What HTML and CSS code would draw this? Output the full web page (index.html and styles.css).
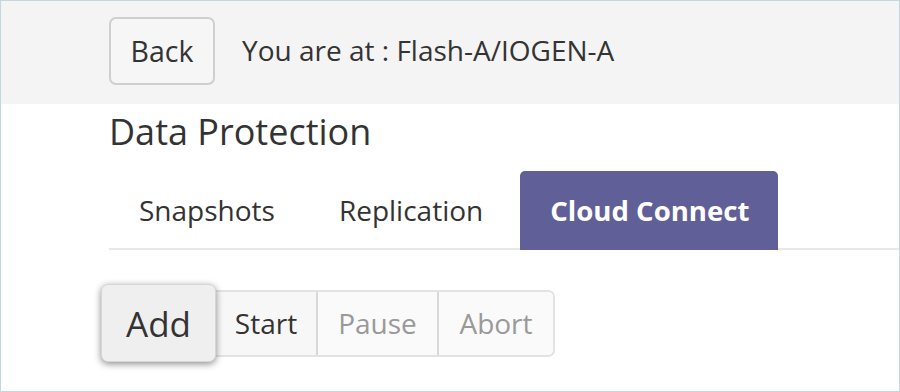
FILE: index.html
```html
<!DOCTYPE html>
<html>
<head>
<meta charset="utf-8">
<link rel="stylesheet" href="styles.css">
</head>
<body>
<div class="frame">
  <header class="topbar">
    <button class="back-btn">Back</button>
    <span class="crumb">You are at : Flash-A/IOGEN-A</span>
  </header>
  <main class="content">
    <h1 class="title">Data Protection</h1>
    <nav class="tabs">
      <a class="tab">Snapshots</a>
      <a class="tab">Replication</a>
      <a class="tab active">Cloud Connect</a>
    </nav>
    <div class="toolbar">
      <button class="add-btn">Add</button>
      <div class="btn-group">
        <button class="grp-btn start">Start</button>
        <button class="grp-btn disabled">Pause</button>
        <button class="grp-btn disabled">Abort</button>
      </div>
    </div>
  </main>
</div>
</body>
</html>
```

FILE: styles.css
```css
* { box-sizing: border-box; }
html, body {
  margin: 0;
  padding: 0;
  background: #ffffff;
}
body {
  font-family: "Open Sans", "Noto Sans", sans-serif;
  color: #333333;
}
.frame {
  width: 900px;
  height: 392px;
  border: 1px solid #c3d7df;
  overflow: hidden;
  background: #ffffff;
}
.topbar {
  height: 103px;
  background: #f4f4f4;
  display: flex;
  align-items: flex-start;
  padding: 16px 0 0 108px;
  gap: 27px;
}
.back-btn {
  width: 106px;
  height: 68px;
  border: 2px solid #cfcfcf;
  border-radius: 7px;
  background: #f6f6f6;
  font-family: inherit;
  font-size: 28.5px;
  color: #333333;
  padding: 0;
  line-height: 1;
}
.crumb {
  font-size: 28px;
  line-height: 66px;
  color: #333333;
}
.content {
  padding-left: 108px;
}
.title {
  margin: 0;
  font-weight: 400;
  font-size: 36px;
  line-height: 56px;
  color: #333333;
  height: 67px;
}
.tabs {
  display: flex;
  align-items: flex-end;
  gap: 5px;
  border-bottom: 2px solid #e8e8e8;
  height: 79px;
}
.tab {
  display: block;
  height: 77px;
  line-height: 78px;
  padding: 0 29px 0 30px;
  font-size: 28px;
  color: #333333;
  border-radius: 5px 5px 0 0;
  white-space: nowrap;
}
.tab.active {
  background: #615f97;
  color: #ffffff;
  font-weight: 700;
  font-size: 27.6px;
  margin-bottom: -2px;
  margin-left: 3px;
  height: 79px;
  padding: 0 29px 0 30px;
}
.toolbar {
  display: flex;
  align-items: center;
  margin-top: 34px;
  margin-left: -8px;
}
.add-btn {
  width: 115px;
  height: 78px;
  border: 1px solid #d6d6d6;
  border-radius: 7px;
  background: #efefef;
  box-shadow: 0 2px 7px rgba(0, 0, 0, 0.45);
  font-family: inherit;
  font-size: 35px;
  color: #333333;
  padding: 0;
  position: relative;
  z-index: 1;
}
.btn-group {
  display: flex;
  height: 67px;
  border: 2px solid #e2e2e2;
  border-left: none;
  border-radius: 0 7px 7px 0;
  overflow: hidden;
}
.grp-btn {
  font-family: inherit;
  font-size: 28px;
  color: #333333;
  background: #f7f7f7;
  border: none;
  border-right: 2px solid #d8d8d8;
  height: 100%;
  padding: 0;
  white-space: nowrap;
}
.grp-btn.start {
  border-top: 2px solid #cccccc;
  border-bottom: 2px solid #cccccc;
  margin-top: -2px;
  height: calc(100% + 4px);
  width: 102px;
}
.grp-btn.disabled {
  color: #999999;
  background: #fafafa;
  width: 121px;
}
.grp-btn:last-child {
  border-right: none;
  width: 114px;
}
```
